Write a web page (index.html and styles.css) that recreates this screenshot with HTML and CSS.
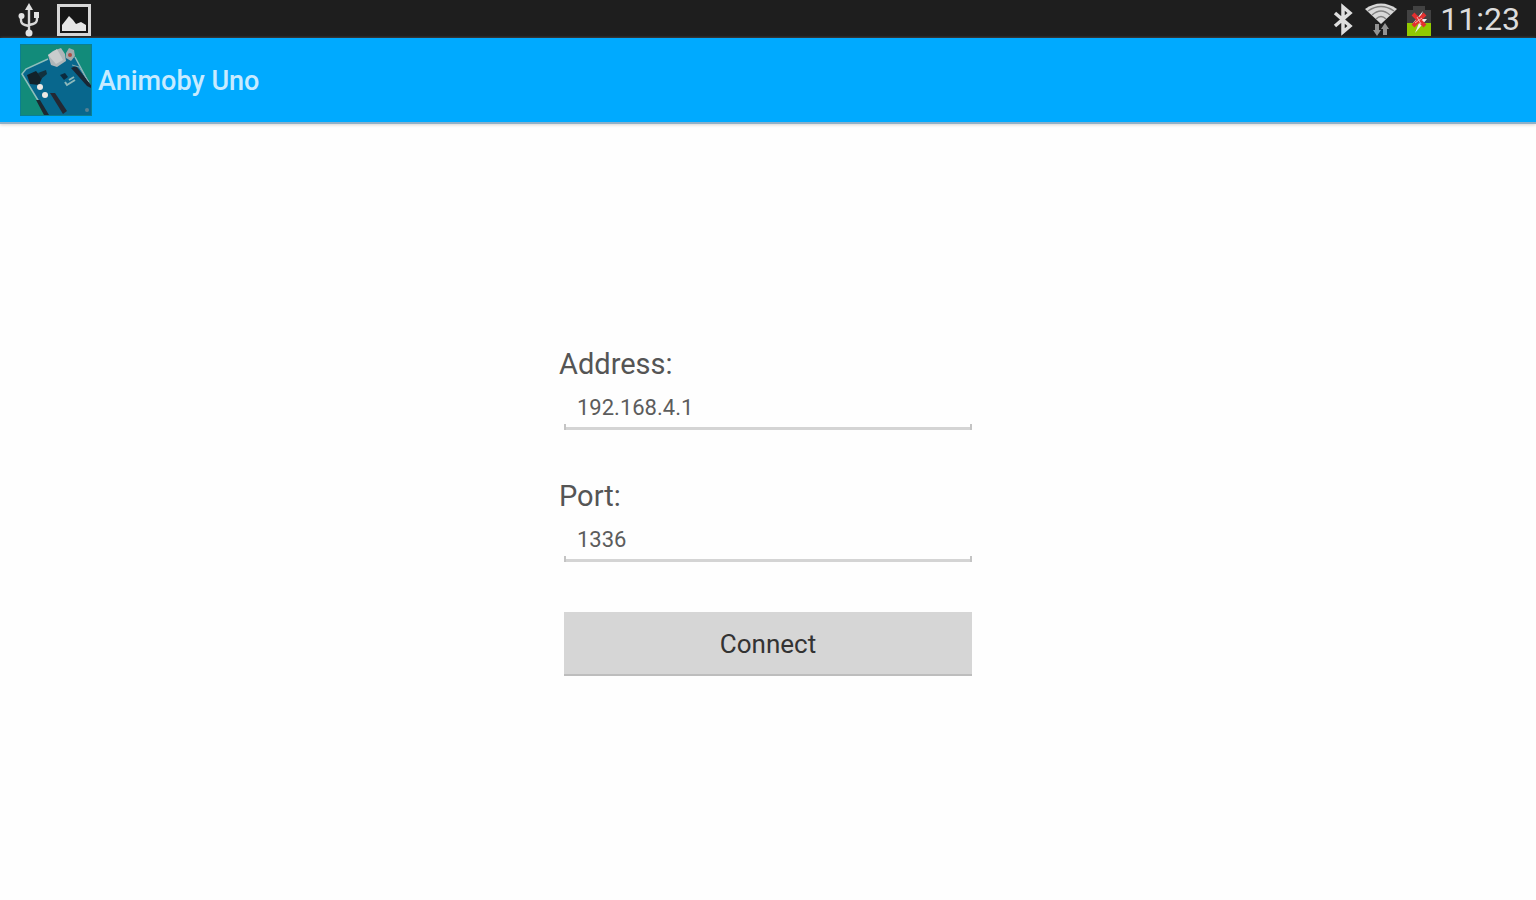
FILE: index.html
```html
<!DOCTYPE html>
<html lang="en">
<head>
<meta charset="utf-8">
<meta name="viewport" content="width=device-width, initial-scale=1">
<title>Animoby Uno</title>
<link rel="stylesheet" href="styles.css">
</head>
<body>
<div class="status-bar">
  <div class="status-group status-left">
    <svg width="22" height="36" viewBox="0 0 22 36" aria-hidden="true">
      <g fill="none" stroke="#d8d8d8" stroke-width="2.4">
        <path d="M11 7V32M3 16v3q0 4 4 5l4 1M19 15v3q0 4-4 5l-4 1"/>
      </g>
      <g fill="#e2e2e2">
        <path d="M11 2l4 7H7z"/><circle cx="3.500" cy="15" r="3"/><path d="M16 11h5v6h-5z"/><circle cx="11" cy="32" r="3.500"/>
      </g>
    </svg>
    <svg width="36" height="36" viewBox="0 0 36 36" aria-hidden="true">
      <rect x="2.500" y="4.500" width="31" height="29" fill="#161616" stroke="#d6d6d6" stroke-width="3"/>
      <path d="M6 30v-6l4-5 3-4 4 4 3 4 5-2 5 3v6z" fill="#e6e6e6"/>
    </svg>
  </div>
  <div class="status-group status-right">
    <svg width="24" height="36" viewBox="0 0 24 36" aria-hidden="true">
      <path d="M3 12L18 25 11 31V6l7 6L3 25" fill="none" stroke="#dedede" stroke-width="3.500"/>
    </svg>
    <svg width="34" height="36" viewBox="0 0 34 36" aria-hidden="true">
      <path d="M1 8Q17-3 33 8L17 23z" fill="#d8d8d8"/>
      <path d="M4 10Q17 1 30 10M8 14Q17 6 26 14M12 18Q17 13 22 18" fill="none" stroke="#808080" stroke-width="1.500"/>
      <path d="M11 23h4v6h2l-4 6-4-6h2zM19 34h4v-6h2l-4-6-4 6h2z" fill="#929292"/>
    </svg>
    <svg width="26" height="36" viewBox="0 0 26 36" aria-hidden="true">
      <path d="M7 5h12v4h6v14H1V9h6z" fill="#424242"/>
      <path d="M1 22h24v13H1z" fill="#91c900"/>
      <path d="M17 10L7 22h6l-4 10 12-14h-7z" fill="#f1eeee"/>
      <path d="M7 13l12 12M19 13L7 25" stroke="#e32f2f" stroke-width="4"/>
      <path d="M11 16l4 7M16 17l-7 5" stroke="#f5b0ad" stroke-width="1"/>
    </svg>
    <time class="clock">11:23</time>
  </div>
</div>
<header class="app-bar">
  <svg class="app-icon" width="72" height="72" viewBox="0 0 72 72" aria-hidden="true">
    <rect width="72" height="72" fill="#128b7a"/>
    <path d="M56 14L72 43V72H28L2 30l4-5 22-10 20-2z" fill="#08678d"/>
    <path d="M27 71L2 30l4-5 22-10M55 13l16 30" fill="none" stroke="#8ebebb" stroke-width="1.500"/>
    <path d="M7 31l9-4 6 7-3 7-9-1z" fill="#12222a"/>
    <path d="M18 29l8-3 1 4-6 5z" fill="#12313e"/>
    <path d="M28 11l5-4 8-3 4 6 1 7-9 6-6-2z" fill="#aeb6b9"/>
    <path d="M28 11l9-6 6 11-7 4z" fill="#c9cccd"/>
    <path d="M46 9l3-5 5 2 1 6-4 5-5-3z" fill="#a0aaad"/>
    <circle cx="50" cy="11" r="2" fill="#a94f43"/>
    <path d="M51 24l5-2 15 19v3l-4-2z" fill="#192735"/>
    <path d="M52 21l7 2 10 15" fill="none" stroke="#84a9af" stroke-width="1"/>
    <path d="M40 31l5-2 3 4-4 3z" fill="#0c2a3e"/>
    <path d="M45 38l2 3 8-5M49 36l5-3" fill="none" stroke="#8cb8bb" stroke-width="2"/>
    <path d="M30 49l5 0 12 18-4 3z" fill="#242833"/>
    <path d="M16 56l4 0 9 15h-5z" fill="#1d2730"/>
    <circle cx="20" cy="43" r="3" fill="#eee9e4"/>
    <circle cx="25" cy="51" r="3" fill="#eee9e4"/>
    <circle cx="67" cy="66" r="2" fill="#568092"/>
    <rect x="0.500" y="0.500" width="71" height="71" fill="none" stroke="#0a7f92" stroke-width="1"/>
  </svg>
  <h1 class="app-title">Animoby Uno</h1>
</header>
<main class="content">
  <form class="connect-form">
    <div class="field">
      <label class="field-label" for="address">Address:</label>
      <input class="field-input" id="address" type="text" value="192.168.4.1">
    </div>
    <div class="field">
      <label class="field-label" for="port">Port:</label>
      <input class="field-input" id="port" type="text" value="1336">
    </div>
    <button class="connect-button" type="button">Connect</button>
  </form>
</main>
</body>
</html>
```
FILE: styles.css
```css
* {
  box-sizing: border-box;
}

body {
  margin: 0;
  min-height: 100vh;
  display: flex;
  flex-direction: column;
  background: #fefefe;
  font-family: Roboto, "Liberation Sans", sans-serif;
}

.status-bar {
  display: flex;
  justify-content: space-between;
  align-items: center;
  height: 38px;
  padding: 0 16px 0 18px;
  background: #1e1e1e;
  border-bottom: 1px solid #10151a;
}

.status-group {
  display: flex;
  align-items: center;
}

.status-left {
  gap: 16px;
}

.status-right {
  gap: 8px;
}

.clock {
  color: #dcdcdc;
  font-size: 32px;
  line-height: 36px;
}

.app-bar {
  display: flex;
  align-items: center;
  gap: 6px;
  height: 86px;
  padding: 0 20px;
  background: #00aaff;
  border-bottom: 2px solid #8eb0c8;
  box-shadow: 0 1px 3px #d8d4d0;
}

.app-title {
  margin: 0;
  padding-top: 2px;
  color: #c8ebff;
  font-size: 27px;
  font-weight: 500;
  line-height: 36px;
}

.content {
  flex: 1;
  display: flex;
  justify-content: center;
  align-items: center;
  padding: 16px 16px 20px;
}

.connect-form {
  display: flex;
  flex-direction: column;
  gap: 46px;
  width: 100%;
  max-width: 420px;
}

.field {
  display: flex;
  flex-direction: column;
}

.field-label {
  padding-left: 1px;
  color: #555;
  font-size: 29px;
  line-height: 40px;
}

.field-input {
  height: 46px;
  margin: 0 6px;
  padding: 0 12px 0 13px;
  border: 0;
  outline: 0;
  background:
    linear-gradient(#c4c4c4, #c4c4c4) left bottom / 2px 6px no-repeat,
    linear-gradient(#c4c4c4, #c4c4c4) right bottom / 2px 6px no-repeat,
    linear-gradient(#d4d4d4, #d4d4d4) left bottom / 100% 3px no-repeat;
  color: #5c5c5c;
  font-family: inherit;
  font-size: 22px;
}

.connect-button {
  height: 64px;
  margin: 4px 6px 0;
  padding: 2px 0 0;
  border: 0;
  border-bottom: 2px solid #bdbdbd;
  background: #d6d6d6;
  color: #333;
  font-family: inherit;
  font-size: 26px;
}
```
